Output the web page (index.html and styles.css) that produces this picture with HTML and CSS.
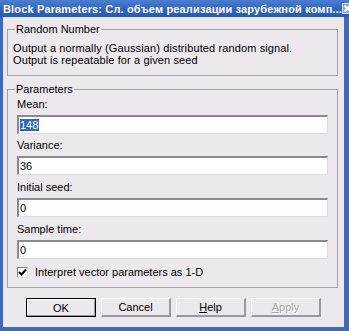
FILE: index.html
```html
<!DOCTYPE html>
<html>
<head>
<meta charset="utf-8">
<link rel="stylesheet" href="styles.css">
</head>
<body>
<div class="window">
  <div class="titlebar">
    <span class="title">Block Parameters: Сл. объем реализации зарубежной комп...</span>
    <span class="close"><svg width="9" height="9" viewBox="0 0 9 9"><path d="M1.5 1.5 L7.5 7.5 M7.5 1.5 L1.5 7.5" stroke="#fff" stroke-width="2"/></svg></span>
  </div>
  <div class="client">
    <fieldset class="group g1">
      <legend>Random Number</legend>
      <p class="desc">Output a normally (Gaussian) distributed random signal.&nbsp; Output is repeatable for a given seed</p>
    </fieldset>
    <fieldset class="group g2">
      <legend>Parameters</legend>
      <div class="field">
        <label>Mean:</label>
        <div class="input"><span class="sel">148</span></div>
      </div>
      <div class="field">
        <label>Variance:</label>
        <div class="input">36</div>
      </div>
      <div class="field">
        <label>Initial seed:</label>
        <div class="input">0</div>
      </div>
      <div class="field">
        <label>Sample time:</label>
        <div class="input">0</div>
      </div>
      <div class="check">
        <span class="box"><svg width="9" height="9" viewBox="0 0 9 9"><path d="M1 4 L3.5 6.5 L8 1.5" fill="none" stroke="#000" stroke-width="2"/></svg></span>
        <span>Interpret vector parameters as 1-D</span>
      </div>
    </fieldset>
    <div class="buttons">
      <button class="btn default">OK</button>
      <button class="btn">Cancel</button>
      <button class="btn"><u>H</u>elp</button>
      <button class="btn disabled"><u>A</u>pply</button>
    </div>
  </div>
</div>
</body>
</html>
```
FILE: styles.css
```css
html, body {
  margin: 0;
  padding: 0;
  background: #3f70c4;
}
.window {
  width: 349px;
  height: 331px;
  box-sizing: border-box;
  padding: 0 5px 4px 3px;
  background: #3a6bc2;
  display: flex;
  flex-direction: column;
  font-family: "Liberation Sans", Arial, sans-serif;
  font-size: 11px;
  color: #000;
}
.titlebar {
  height: 17px;
  flex: none;
  display: flex;
  align-items: center;
  justify-content: space-between;
  background: linear-gradient(#4a7fd0, #2f62b9 60%, #2a5bb0);
  margin: 0 -5px 0 -3px;
  padding: 0 5px 0 3px;
}
.title {
  color: #fff;
  font-weight: bold;
  font-size: 11px;
  white-space: nowrap;
  letter-spacing: 0.15px;
}
.close {
  width: 11px;
  height: 11px;
  box-sizing: border-box;
  border: 1px solid #d8e4f8;
  background: #7da3e0;
  display: flex;
  align-items: center;
  justify-content: center;
  margin-right: 1px;
}
.client {
  flex: 1;
  background: #ece9ed;
  padding: 6px 6px 0 4px;
  display: flex;
  flex-direction: column;
}
.group {
  margin: 0;
  border: 1px solid #a5a3a8;
  padding: 0 9px;
  min-width: 0;
}
.group legend {
  padding: 0 1px;
  margin-left: -2px;
  line-height: 13px;
}
.g1 {
  padding-bottom: 9px;
}
.desc {
  margin: 6px 0 0 -4px;
  line-height: 12px;
  width: 300px;
  letter-spacing: 0.12px;
}
.g2 {
  margin-top: 7px;
  padding-top: 2px;
  padding-bottom: 9px;
}
.field label {
  display: block;
  line-height: 13px;
  height: 13px;
  margin-bottom: 4px;
}
.field + .field {
  margin-top: 5px;
}
.field:nth-child(n+4) {
  margin-top: 6px;
}
.input {
  height: 19px;
  box-sizing: border-box;
  background: #fff;
  border-top: 2px solid #8a8a8c;
  border-left: 2px solid #8a8a8c;
  border-right: 1px solid #dcdcdc;
  border-bottom: 1px solid #dcdcdc;
  padding: 2px 1px 0;
  line-height: 13px;
}
.sel {
  background: #316ac5;
  color: #fff;
  padding: 0 1px 0 0;
}
.check {
  display: flex;
  align-items: center;
  margin-top: 7px;
  gap: 7px;
}
.box {
  width: 11px;
  height: 11px;
  box-sizing: border-box;
  background: #fff;
  border-top: 1px solid #808080;
  border-left: 1px solid #808080;
  border-right: 1px solid #e0e0e0;
  border-bottom: 1px solid #e0e0e0;
  display: flex;
  align-items: center;
  justify-content: center;
}
.buttons {
  display: flex;
  gap: 5px;
  margin-top: 10px;
  padding-left: 19px;
}
.btn {
  width: 70px;
  height: 19px;
  box-sizing: border-box;
  font-family: "Liberation Sans", Arial, sans-serif;
  font-size: 11px;
  color: #000;
  background: #ece9ed;
  border-top: 1px solid #fff;
  border-left: 1px solid #fff;
  border-right: 2px solid #9a989c;
  border-bottom: 2px solid #9a989c;
  padding: 0;
}
.btn.default {
  border: 1px solid #000;
  box-shadow: inset -1px -1px 0 #9a989c, inset 1px 1px 0 #fff;
}
.btn.disabled {
  color: #a8a6aa;
  text-shadow: 1px 1px 0 #fff;
}
```
